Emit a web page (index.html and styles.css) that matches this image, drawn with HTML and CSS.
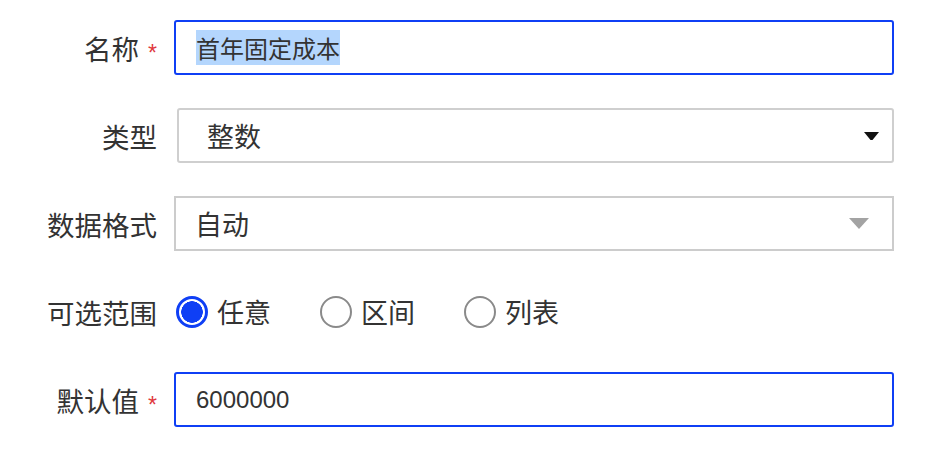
FILE: index.html
```html
<!DOCTYPE html>
<html lang="zh">
<head>
<meta charset="utf-8">
<link rel="stylesheet" href="styles.css">
</head>
<body>
<form class="form">
  <div class="label">名称<span class="star">*</span></div>
  <div class="field field-focus"><span class="selected">首年固定成本</span></div>

  <div class="label">类型</div>
  <div class="field select-type">
    <span class="sel-text">整数</span>
    <svg class="caret-black" width="15" height="8" viewBox="0 0 15 8"><path d="M0 0H15L8.5 8H6.5Z" fill="#111"/></svg>
  </div>

  <div class="label">数据格式</div>
  <div class="field select-format">
    <span class="sel-text">自动</span>
    <svg class="caret-gray" width="20" height="11" viewBox="0 0 20 11"><path d="M0 0H20L10 11Z" fill="#a3a3a3"/></svg>
  </div>

  <div class="label">可选范围</div>
  <div class="radios">
    <div class="radio-item"><span class="radio checked"></span><span class="radio-text">任意</span></div>
    <div class="radio-item"><span class="radio"></span><span class="radio-text">区间</span></div>
    <div class="radio-item"><span class="radio"></span><span class="radio-text">列表</span></div>
  </div>

  <div class="label">默认值<span class="star">*</span></div>
  <div class="field field-focus num">6000000</div>
</form>
</body>
</html>
```

FILE: styles.css
```css
html, body {
  margin: 0;
  padding: 0;
  background: #fff;
}

body {
  font-family: "Noto Sans CJK SC", "Liberation Sans", sans-serif;
  color: #333;
}

.form {
  display: grid;
  grid-template-columns: 157px 720px;
  grid-auto-rows: 55px;
  column-gap: 17px;
  row-gap: 33px;
  padding-top: 20px;
}

.label {
  display: flex;
  align-items: center;
  justify-content: flex-end;
  font-size: 27.5px;
  color: #333;
  white-space: nowrap;
}

.star {
  font-family: "Liberation Sans", sans-serif;
  font-size: 23px;
  color: #e0393e;
  margin-left: 9px;
  line-height: 1;
  padding-top: 12px;
}

.field {
  box-sizing: border-box;
  display: flex;
  align-items: center;
  height: 55px;
  background: #fff;
}

.field-focus {
  border: 2px solid #0f3ff5;
  border-radius: 3px;
  padding-left: 20px;
  font-family: "Liberation Sans", "Noto Sans CJK SC", sans-serif;
  font-size: 24px;
  color: #333;
}

.selected {
  font-family: "Noto Sans CJK SC", sans-serif;
  background: #b4d6fd;
}

.num {
  padding-left: 20px;
}

.select-type {
  margin-left: 3px;
  border: 2px solid #cfcfcf;
  border-radius: 3px;
  padding-left: 28px;
  padding-right: 13px;
  justify-content: space-between;
}

.select-format {
  border: 2px solid #cccccc;
  padding-left: 19px;
  padding-right: 23px;
  justify-content: space-between;
}

.sel-text {
  font-size: 27px;
  color: #333;
}

.caret-black, .caret-gray {
  display: block;
}

.radios {
  display: flex;
  align-items: center;
  gap: 49px;
  padding-left: 2px;
}

.radio-item {
  display: flex;
  align-items: center;
  gap: 9px;
}

.radio {
  box-sizing: border-box;
  width: 32px;
  height: 32px;
  border-radius: 50%;
  border: 2px solid #8a8a8a;
  background: #fff;
}

.radio.checked {
  border: 3px solid #0f3ff5;
  background: radial-gradient(circle, #0f3ff5 0 10.5px, #fff 11px);
}

.radio-text {
  font-size: 27px;
  color: #333;
}
```
